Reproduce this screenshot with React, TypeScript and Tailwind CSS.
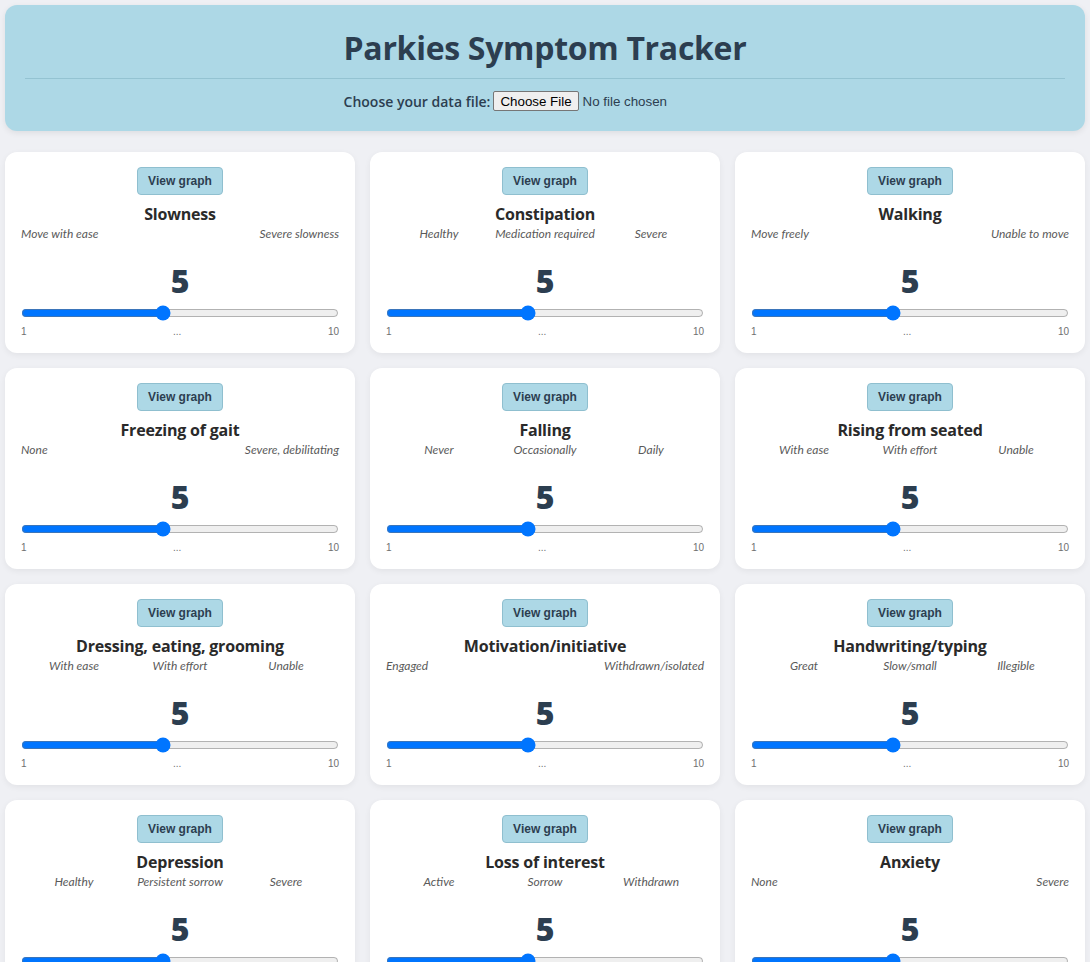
import React from "react";

type Symptom = { name: string; labels: string[] };

const symptoms: Symptom[] = [
  { name: "Slowness", labels: ["Move with ease", "Severe slowness"] },
  { name: "Constipation", labels: ["Healthy", "Medication required", "Severe"] },
  { name: "Walking", labels: ["Move freely", "Unable to move"] },
  { name: "Freezing of gait", labels: ["None", "Severe, debilitating"] },
  { name: "Falling", labels: ["Never", "Occasionally", "Daily"] },
  { name: "Rising from seated", labels: ["With ease", "With effort", "Unable"] },
  { name: "Dressing, eating, grooming", labels: ["With ease", "With effort", "Unable"] },
  { name: "Motivation/initiative", labels: ["Engaged", "Withdrawn/isolated"] },
  { name: "Handwriting/typing", labels: ["Great", "Slow/small", "Illegible"] },
  { name: "Depression", labels: ["Healthy", "Persistent sorrow", "Severe"] },
  { name: "Loss of interest", labels: ["Active", "Sorrow", "Withdrawn"] },
  { name: "Anxiety", labels: ["None", "Severe"] },
];

function Card({ s }: { s: Symptom }) {
  return (
    <div className="bg-white rounded-xl shadow-[0_2px_6px_rgba(0,0,0,0.06)] px-4 pt-[15px] pb-[14px] flex flex-col items-center">
      <button className="h-[28px] px-[10px] rounded-[4px] bg-[#add8e6] border border-[#8fbfcf] text-[12px] font-bold text-[#2c3e50] font-['Liberation_Sans',Arial,sans-serif]">
        View graph
      </button>
      <h3 className="mt-[8px] text-[16px] leading-[22px] font-bold text-[#2a2a2a] font-['Open_Sans','Noto_Sans',sans-serif] tracking-[-0.2px]">
        {s.name}
      </h3>
      {s.labels.length === 2 ? (
        <div className="w-full flex justify-between mt-[1px] text-[12px] leading-[16px] italic text-[#5a5a5a] font-['Lato',sans-serif]">
          <span>{s.labels[0]}</span>
          <span>{s.labels[1]}</span>
        </div>
      ) : (
        <div className="w-full flex mt-[1px] text-[12px] leading-[16px] italic text-[#5a5a5a] font-['Lato',sans-serif]">
          {s.labels.map((l) => (
            <span key={l} className="flex-1 text-center">
              {l}
            </span>
          ))}
        </div>
      )}
      <div className="mt-[19px] text-[32px] leading-[40px] font-extrabold text-[#2c3e50] font-['Open_Sans','Noto_Sans',sans-serif]">
        5
      </div>
      <input
        type="range"
        min={1}
        max={10}
        defaultValue={5}
        className="mt-[4px] w-full h-4 block"
      />
      <div className="w-full flex justify-between mt-[4px] text-[10px] leading-[14px] text-[#707070] font-['Liberation_Sans',Arial,sans-serif]">
        <span>1</span>
        <span>...</span>
        <span>10</span>
      </div>
    </div>
  );
}

export default function App() {
  return (
    <div className="min-h-screen bg-[#eff0f4] p-[5px] font-['Open_Sans','Noto_Sans',sans-serif]">
      <header className="bg-[#add8e6] rounded-xl shadow-[0_2px_6px_rgba(0,0,0,0.08)] px-5 pt-[25px] pb-[20px]">
        <h1 className="text-center text-[32px] leading-[36px] font-bold text-[#2c3e50] tracking-[-0.3px]">
          Parkies Symptom Tracker
        </h1>
        <div className="mt-[12px] border-t border-[#94c3d2]" />
        <div className="mt-[12px] h-[20px] flex items-center justify-center gap-[3px] text-[14px] text-[#2c3e50]">
          <label className="font-semibold">Choose your data file:</label>
          <input
            type="file"
            className="text-[13.33px] font-['Liberation_Sans',Arial,sans-serif] text-[#2c3e50] file:h-[20px] file:px-[6px] file:mr-[4px] file:border file:border-solid file:border-[#767676] file:rounded-[2px] file:bg-[#efefef] file:text-black"
          />
        </div>
      </header>
      <div className="mt-[21px] grid grid-cols-3 gap-[15px]">
        {symptoms.map((s) => (
          <Card key={s.name} s={s} />
        ))}
      </div>
    </div>
  );
}
